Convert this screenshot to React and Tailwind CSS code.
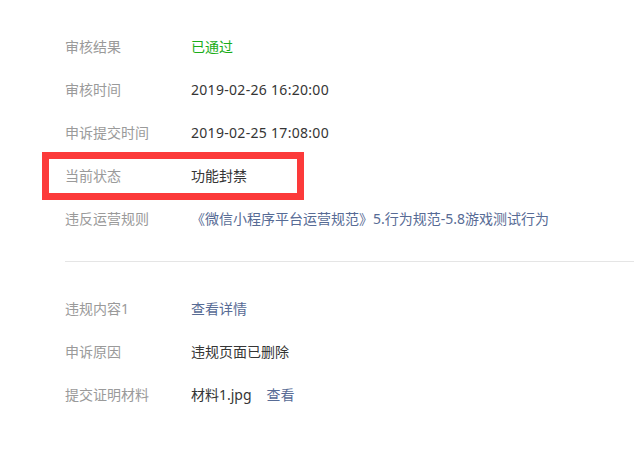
import React from 'react';

const Row = ({ label, children }) => (
  <div className="flex items-center h-[43px]">
    <div className="w-[126px] shrink-0 text-[#9a9a9a]">{label}</div>
    <div className="flex items-center text-[#353535]">{children}</div>
  </div>
);

const App = () => {
  return (
    <div
      className="relative w-[634px] h-[469px] bg-white overflow-hidden text-[14px]"
      style={{ fontFamily: '"Noto Sans", "Noto Sans CJK SC", sans-serif' }}
    >
      <div className="pt-[25px] pl-[65px]">
        <Row label="审核结果">
          <span className="text-[#1aad19]">已通过</span>
        </Row>
        <Row label="审核时间">
          <span className="tracking-[0.3px]">2019-02-26 16:20:00</span>
        </Row>
        <Row label="申诉提交时间">
          <span className="tracking-[0.3px]">2019-02-25 17:08:00</span>
        </Row>
        <Row label="当前状态">功能封禁</Row>
        <Row label="违反运营规则">
          <span className="text-[#576b95]">《微信小程序平台运营规范》5.行为规范-5.8游戏测试行为</span>
        </Row>

        <div className="mt-[21px] mb-[25px] h-px bg-[#e5e5e5]" />

        <Row label="违规内容1">
          <span className="text-[#576b95]">查看详情</span>
        </Row>
        <Row label="申诉原因">违规页面已删除</Row>
        <Row label="提交证明材料">
          <span>材料1.jpg</span>
          <span className="ml-[15px] text-[#576b95]">查看</span>
        </Row>
      </div>

      {/* annotation box */}
      <div className="absolute left-[42px] top-[152px] w-[262px] h-[48px] border-[7px] border-[#fc3a3a]" />
    </div>
  );
};

export default App;
